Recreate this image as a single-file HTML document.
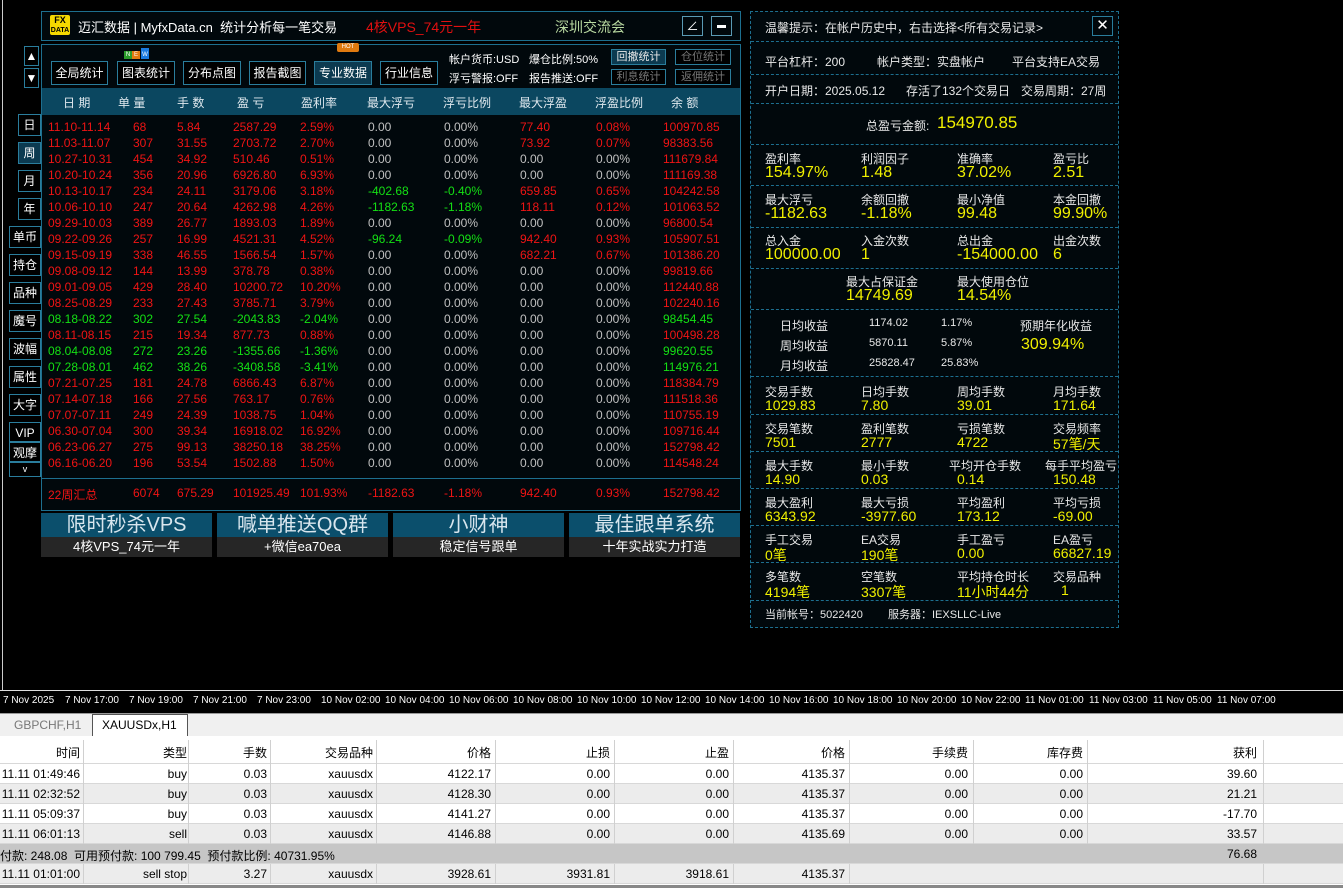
<!DOCTYPE html>
<html><head><meta charset="utf-8"><style>
*{margin:0;padding:0;box-sizing:border-box}
body{width:1343px;height:888px;background:#000;position:relative;overflow:hidden;font-family:"Liberation Sans","Noto Sans CJK SC",sans-serif;font-size:12px;color:#ddd}
.a{position:absolute;white-space:nowrap}
.box{position:absolute;border:1px solid #1d6f8f;background:#01080c}
.btn{position:absolute;border:1px solid #2a7d9c;background:#000;color:#fff;font-size:12px;text-align:center;line-height:22px}
.sb{position:absolute;border:1px solid #2a7d9c;background:#000;color:#fff;font-size:12px;text-align:center;line-height:20px}
.r{position:absolute;height:16px;left:0;width:700px;font-size:12px}
.r span{position:absolute;top:0}
.k1{left:7px}.k2{left:92px}.k3{left:136px}.k4{left:192px}.k5{left:259px}.k6{left:327px}.k7{left:403px}.k8{left:479px}.k9{left:555px}.k10{left:622px}
.R{color:#f01414}.G{color:#14e014}.Z{color:#c0c0c0}
.hd span{color:#dfe8ee;position:absolute;font-size:12px}
.rp{position:absolute;left:750px;top:11px;width:369px;height:617px;border:1px dashed #1d6f8f;background:#01080c}
.sec{position:absolute;left:0;width:367px;border-top:1px dashed #1d6f8f}
.lb{position:absolute;color:#e8e8e8;font-size:12px;white-space:nowrap}
.vl{position:absolute;color:#f0f000;font-size:16px;white-space:nowrap}
.ban{position:absolute;top:513px;width:171px;height:24px;background:#0b4f6c;color:#d8e6ee;font-size:20px;text-align:center;line-height:24px}
.bsub{position:absolute;top:537px;width:171px;height:20px;background:#262626;color:#fff;font-size:13px;text-align:center;line-height:20px}
.tb{position:absolute;left:0;width:1343px;height:20px;font-size:12px;color:#000;border-bottom:1px solid #d8d8d8}
.tb span{position:absolute;top:3px;text-align:right}
.cl{position:absolute;top:740px;width:1px;height:145px;background:#d0d0d0}
</style></head><body>
<div class="a" style="left:2px;top:0;width:1px;height:690px;background:#ccc"></div>
<!-- title bar -->
<div class="box" style="left:41px;top:11px;width:700px;height:30px"></div>
<div class="a" style="left:50px;top:15px;width:20px;height:20px;background:#f5d800;border-radius:2px;color:#000;font-size:9px;font-weight:bold;line-height:9px;text-align:center;padding-top:1px">FX<br><span style="font-size:7px">DATA</span></div>
<div class="a" style="left:78px;top:17px;color:#fff;font-size:13px">迈汇数据 | MyfxData.cn &nbsp;统计分析每一笔交易</div>
<div class="a" style="left:366px;top:17px;color:#e01010;font-size:14px">4核VPS_74元一年</div>
<div class="a" style="left:555px;top:17px;color:#b8d8a0;font-size:14px">深圳交流会</div>
<div class="a" style="left:682px;top:16px;width:21px;height:20px;border:1px solid #5a9ab4;color:#fff;text-align:center;line-height:18px;font-size:12px">∠</div>
<div class="a" style="left:711px;top:16px;width:21px;height:20px;border:1px solid #5a9ab4"><div style="position:absolute;left:5px;top:8px;width:9px;height:3px;background:#fff"></div></div>
<!-- arrows -->
<div class="sb" style="left:24px;top:46px;width:15px;height:20px;line-height:18px">▲</div>
<div class="sb" style="left:24px;top:68px;width:15px;height:20px;line-height:18px">▼</div>
<!-- main box -->
<div class="box" style="left:41px;top:44px;width:700px;height:467px"></div>
<div class="btn" style="left:51px;top:61px;width:57px;height:24px">全局统计</div>
<div class="btn" style="left:117px;top:61px;width:58px;height:24px">图表统计</div>
<div class="a" style="left:124px;top:51px;width:8px;height:8px;background:#2a9a2a;color:#fff;font-size:6px;text-align:center;line-height:8px">N</div>
<div class="a" style="left:132px;top:51px;width:8px;height:8px;background:#e07a10;color:#fff;font-size:6px;text-align:center;line-height:8px">E</div>
<div class="a" style="left:141px;top:48px;width:8px;height:11px;background:#1a7ae0;color:#fff;font-size:6px;text-align:center;line-height:14px">W</div>
<div class="btn" style="left:183px;top:61px;width:58px;height:24px">分布点图</div>
<div class="btn" style="left:249px;top:61px;width:57px;height:24px">报告截图</div>
<div class="btn" style="left:314px;top:61px;width:58px;height:24px;background:#0c3a50">专业数据</div>
<div class="a" style="left:337px;top:43px;width:22px;height:9px;background:#e07a10;color:#fff;font-size:6px;text-align:center;line-height:9px;border-radius:2px">HOT</div>
<div class="btn" style="left:380px;top:61px;width:58px;height:24px">行业信息</div>
<div class="a" style="left:449px;top:51px;color:#fff;font-size:11px">帐户货币:USD</div>
<div class="a" style="left:529px;top:51px;color:#fff;font-size:11px">爆仓比例:50%</div>
<div class="a" style="left:449px;top:70px;color:#fff;font-size:11px">浮亏警报:OFF</div>
<div class="a" style="left:529px;top:70px;color:#fff;font-size:11px">报告推送:OFF</div>
<div class="btn" style="left:611px;top:49px;width:55px;height:16px;line-height:14px;font-size:11px;background:#0c3a50;color:#e8e8e8">回撤统计</div>
<div class="btn" style="left:675px;top:49px;width:56px;height:16px;line-height:14px;font-size:11px;color:#777">仓位统计</div>
<div class="btn" style="left:611px;top:69px;width:55px;height:16px;line-height:14px;font-size:11px;color:#777">利息统计</div>
<div class="btn" style="left:675px;top:69px;width:56px;height:16px;line-height:14px;font-size:11px;color:#777">返佣统计</div>
<!-- header -->
<div class="a hd" style="left:42px;top:88px;width:698px;height:27px;background:#0b4760">
<span style="left:21px;top:6px">日 期</span><span style="left:76px;top:6px">单 量</span><span style="left:135px;top:6px">手 数</span><span style="left:195px;top:6px">盈 亏</span><span style="left:259px;top:6px">盈利率</span><span style="left:325px;top:6px">最大浮亏</span><span style="left:401px;top:6px">浮亏比例</span><span style="left:477px;top:6px">最大浮盈</span><span style="left:553px;top:6px">浮盈比例</span><span style="left:629px;top:6px">余 额</span></div>
<div class="a" style="left:41px;top:478px;width:700px;height:1px;background:#1d6f8f"></div>
<div class="a" style="left:41px;top:120px;width:700px;height:360px">
<div class="r R" style="top:0"><span class="k1">11.10-11.14</span><span class="k2">68</span><span class="k3">5.84</span><span class="k4">2587.29</span><span class="k5">2.59%</span><span class="k6 Z">0.00</span><span class="k7 Z">0.00%</span><span class="k8">77.40</span><span class="k9">0.08%</span><span class="k10">100970.85</span></div>
<div class="r R" style="top:16px"><span class="k1">11.03-11.07</span><span class="k2">307</span><span class="k3">31.55</span><span class="k4">2703.72</span><span class="k5">2.70%</span><span class="k6 Z">0.00</span><span class="k7 Z">0.00%</span><span class="k8">73.92</span><span class="k9">0.07%</span><span class="k10">98383.56</span></div>
<div class="r R" style="top:32px"><span class="k1">10.27-10.31</span><span class="k2">454</span><span class="k3">34.92</span><span class="k4">510.46</span><span class="k5">0.51%</span><span class="k6 Z">0.00</span><span class="k7 Z">0.00%</span><span class="k8 Z">0.00</span><span class="k9 Z">0.00%</span><span class="k10">111679.84</span></div>
<div class="r R" style="top:48px"><span class="k1">10.20-10.24</span><span class="k2">356</span><span class="k3">20.96</span><span class="k4">6926.80</span><span class="k5">6.93%</span><span class="k6 Z">0.00</span><span class="k7 Z">0.00%</span><span class="k8 Z">0.00</span><span class="k9 Z">0.00%</span><span class="k10">111169.38</span></div>
<div class="r R" style="top:64px"><span class="k1">10.13-10.17</span><span class="k2">234</span><span class="k3">24.11</span><span class="k4">3179.06</span><span class="k5">3.18%</span><span class="k6 G">-402.68</span><span class="k7 G">-0.40%</span><span class="k8">659.85</span><span class="k9">0.65%</span><span class="k10">104242.58</span></div>
<div class="r R" style="top:80px"><span class="k1">10.06-10.10</span><span class="k2">247</span><span class="k3">20.64</span><span class="k4">4262.98</span><span class="k5">4.26%</span><span class="k6 G">-1182.63</span><span class="k7 G">-1.18%</span><span class="k8">118.11</span><span class="k9">0.12%</span><span class="k10">101063.52</span></div>
<div class="r R" style="top:96px"><span class="k1">09.29-10.03</span><span class="k2">389</span><span class="k3">26.77</span><span class="k4">1893.03</span><span class="k5">1.89%</span><span class="k6 Z">0.00</span><span class="k7 Z">0.00%</span><span class="k8 Z">0.00</span><span class="k9 Z">0.00%</span><span class="k10">96800.54</span></div>
<div class="r R" style="top:112px"><span class="k1">09.22-09.26</span><span class="k2">257</span><span class="k3">16.99</span><span class="k4">4521.31</span><span class="k5">4.52%</span><span class="k6 G">-96.24</span><span class="k7 G">-0.09%</span><span class="k8">942.40</span><span class="k9">0.93%</span><span class="k10">105907.51</span></div>
<div class="r R" style="top:128px"><span class="k1">09.15-09.19</span><span class="k2">338</span><span class="k3">46.55</span><span class="k4">1566.54</span><span class="k5">1.57%</span><span class="k6 Z">0.00</span><span class="k7 Z">0.00%</span><span class="k8">682.21</span><span class="k9">0.67%</span><span class="k10">101386.20</span></div>
<div class="r R" style="top:144px"><span class="k1">09.08-09.12</span><span class="k2">144</span><span class="k3">13.99</span><span class="k4">378.78</span><span class="k5">0.38%</span><span class="k6 Z">0.00</span><span class="k7 Z">0.00%</span><span class="k8 Z">0.00</span><span class="k9 Z">0.00%</span><span class="k10">99819.66</span></div>
<div class="r R" style="top:160px"><span class="k1">09.01-09.05</span><span class="k2">429</span><span class="k3">28.40</span><span class="k4">10200.72</span><span class="k5">10.20%</span><span class="k6 Z">0.00</span><span class="k7 Z">0.00%</span><span class="k8 Z">0.00</span><span class="k9 Z">0.00%</span><span class="k10">112440.88</span></div>
<div class="r R" style="top:176px"><span class="k1">08.25-08.29</span><span class="k2">233</span><span class="k3">27.43</span><span class="k4">3785.71</span><span class="k5">3.79%</span><span class="k6 Z">0.00</span><span class="k7 Z">0.00%</span><span class="k8 Z">0.00</span><span class="k9 Z">0.00%</span><span class="k10">102240.16</span></div>
<div class="r G" style="top:192px"><span class="k1">08.18-08.22</span><span class="k2">302</span><span class="k3">27.54</span><span class="k4">-2043.83</span><span class="k5">-2.04%</span><span class="k6 Z">0.00</span><span class="k7 Z">0.00%</span><span class="k8 Z">0.00</span><span class="k9 Z">0.00%</span><span class="k10">98454.45</span></div>
<div class="r R" style="top:208px"><span class="k1">08.11-08.15</span><span class="k2">215</span><span class="k3">19.34</span><span class="k4">877.73</span><span class="k5">0.88%</span><span class="k6 Z">0.00</span><span class="k7 Z">0.00%</span><span class="k8 Z">0.00</span><span class="k9 Z">0.00%</span><span class="k10">100498.28</span></div>
<div class="r G" style="top:224px"><span class="k1">08.04-08.08</span><span class="k2">272</span><span class="k3">23.26</span><span class="k4">-1355.66</span><span class="k5">-1.36%</span><span class="k6 Z">0.00</span><span class="k7 Z">0.00%</span><span class="k8 Z">0.00</span><span class="k9 Z">0.00%</span><span class="k10">99620.55</span></div>
<div class="r G" style="top:240px"><span class="k1">07.28-08.01</span><span class="k2">462</span><span class="k3">38.26</span><span class="k4">-3408.58</span><span class="k5">-3.41%</span><span class="k6 Z">0.00</span><span class="k7 Z">0.00%</span><span class="k8 Z">0.00</span><span class="k9 Z">0.00%</span><span class="k10">114976.21</span></div>
<div class="r R" style="top:256px"><span class="k1">07.21-07.25</span><span class="k2">181</span><span class="k3">24.78</span><span class="k4">6866.43</span><span class="k5">6.87%</span><span class="k6 Z">0.00</span><span class="k7 Z">0.00%</span><span class="k8 Z">0.00</span><span class="k9 Z">0.00%</span><span class="k10">118384.79</span></div>
<div class="r R" style="top:272px"><span class="k1">07.14-07.18</span><span class="k2">166</span><span class="k3">27.56</span><span class="k4">763.17</span><span class="k5">0.76%</span><span class="k6 Z">0.00</span><span class="k7 Z">0.00%</span><span class="k8 Z">0.00</span><span class="k9 Z">0.00%</span><span class="k10">111518.36</span></div>
<div class="r R" style="top:288px"><span class="k1">07.07-07.11</span><span class="k2">249</span><span class="k3">24.39</span><span class="k4">1038.75</span><span class="k5">1.04%</span><span class="k6 Z">0.00</span><span class="k7 Z">0.00%</span><span class="k8 Z">0.00</span><span class="k9 Z">0.00%</span><span class="k10">110755.19</span></div>
<div class="r R" style="top:304px"><span class="k1">06.30-07.04</span><span class="k2">300</span><span class="k3">39.34</span><span class="k4">16918.02</span><span class="k5">16.92%</span><span class="k6 Z">0.00</span><span class="k7 Z">0.00%</span><span class="k8 Z">0.00</span><span class="k9 Z">0.00%</span><span class="k10">109716.44</span></div>
<div class="r R" style="top:320px"><span class="k1">06.23-06.27</span><span class="k2">275</span><span class="k3">99.13</span><span class="k4">38250.18</span><span class="k5">38.25%</span><span class="k6 Z">0.00</span><span class="k7 Z">0.00%</span><span class="k8 Z">0.00</span><span class="k9 Z">0.00%</span><span class="k10">152798.42</span></div>
<div class="r R" style="top:336px"><span class="k1">06.16-06.20</span><span class="k2">196</span><span class="k3">53.54</span><span class="k4">1502.88</span><span class="k5">1.50%</span><span class="k6 Z">0.00</span><span class="k7 Z">0.00%</span><span class="k8 Z">0.00</span><span class="k9 Z">0.00%</span><span class="k10">114548.24</span></div>
</div>
<div class="r R" style="left:41px;top:486px"><span class="k1">22周汇总</span><span class="k2">6074</span><span class="k3">675.29</span><span class="k4">101925.49</span><span class="k5">101.93%</span><span class="k6">-1182.63</span><span class="k7">-1.18%</span><span class="k8">942.40</span><span class="k9">0.93%</span><span class="k10">152798.42</span></div>
<!-- side buttons -->
<div class="sb" style="left:18px;top:114px;width:23px;height:22px">日</div>
<div class="sb" style="left:18px;top:142px;width:23px;height:22px;background:#0c3a50">周</div>
<div class="sb" style="left:18px;top:170px;width:23px;height:22px">月</div>
<div class="sb" style="left:18px;top:198px;width:23px;height:22px">年</div>
<div class="sb" style="left:9px;top:226px;width:32px;height:22px">单币</div>
<div class="sb" style="left:9px;top:254px;width:32px;height:22px">持仓</div>
<div class="sb" style="left:9px;top:282px;width:32px;height:22px">品种</div>
<div class="sb" style="left:9px;top:310px;width:32px;height:22px">魔号</div>
<div class="sb" style="left:9px;top:338px;width:32px;height:22px">波幅</div>
<div class="sb" style="left:9px;top:366px;width:32px;height:22px">属性</div>
<div class="sb" style="left:9px;top:394px;width:32px;height:22px">大字</div>
<div class="sb" style="left:9px;top:422px;width:32px;height:20px">VIP</div>
<div class="sb" style="left:9px;top:442px;width:32px;height:20px">观摩</div>
<div class="sb" style="left:9px;top:462px;width:32px;height:15px;line-height:12px;font-size:9px">v</div>
<!-- banners -->
<div class="ban" style="left:41px">限时秒杀VPS</div><div class="bsub" style="left:41px">4核VPS_74元一年</div>
<div class="ban" style="left:217px">喊单推送QQ群</div><div class="bsub" style="left:217px">+微信ea70ea</div>
<div class="ban" style="left:393px">小财神</div><div class="bsub" style="left:393px">稳定信号跟单</div>
<div class="ban" style="left:569px">最佳跟单系统</div><div class="bsub" style="left:569px">十年实战实力打造</div>
<!-- right panel -->
<div class="rp">
<div class="lb" style="left:14px;top:7px">温馨提示：在帐户历史中，右击选择&lt;所有交易记录&gt;</div>
<div class="a" style="left:341px;top:4px;width:21px;height:20px;border:1px solid #2a7d9c;color:#fff;text-align:center;line-height:18px;font-size:15px">✕</div>
<div class="sec" style="top:29px"></div>
<div class="lb" style="left:14px;top:41px">平台杠杆：200</div><div class="lb" style="left:126px;top:41px">帐户类型：实盘帐户</div><div class="lb" style="left:261px;top:41px">平台支持EA交易</div>
<div class="sec" style="top:62px"></div>
<div class="lb" style="left:14px;top:70px">开户日期：2025.05.12</div><div class="lb" style="left:155px;top:70px">存活了132个交易日</div><div class="lb" style="left:270px;top:70px">交易周期：27周</div>
<div class="sec" style="top:91px"></div>
<div class="lb" style="left:115px;top:105px">总盈亏金额:</div><div class="vl" style="left:186px;top:101px;font-size:17px">154970.85</div>
<div class="sec" style="top:132px"></div>
<div class="lb" style="left:14px;top:138px">盈利率</div><div class="lb" style="left:110px;top:138px">利润因子</div><div class="lb" style="left:206px;top:138px">准确率</div><div class="lb" style="left:302px;top:138px">盈亏比</div>
<div class="vl" style="left:14px;top:152px">154.97%</div><div class="vl" style="left:110px;top:152px">1.48</div><div class="vl" style="left:206px;top:152px">37.02%</div><div class="vl" style="left:302px;top:152px">2.51</div>
<div class="sec" style="top:173px"></div>
<div class="lb" style="left:14px;top:179px">最大浮亏</div><div class="lb" style="left:110px;top:179px">余额回撤</div><div class="lb" style="left:206px;top:179px">最小净值</div><div class="lb" style="left:302px;top:179px">本金回撤</div>
<div class="vl" style="left:14px;top:193px">-1182.63</div><div class="vl" style="left:110px;top:193px">-1.18%</div><div class="vl" style="left:206px;top:193px">99.48</div><div class="vl" style="left:302px;top:193px">99.90%</div>
<div class="sec" style="top:215px"></div>
<div class="lb" style="left:14px;top:220px">总入金</div><div class="lb" style="left:110px;top:220px">入金次数</div><div class="lb" style="left:206px;top:220px">总出金</div><div class="lb" style="left:302px;top:220px">出金次数</div>
<div class="vl" style="left:14px;top:234px">100000.00</div><div class="vl" style="left:110px;top:234px">1</div><div class="vl" style="left:206px;top:234px">-154000.00</div><div class="vl" style="left:302px;top:234px">6</div>
<div class="sec" style="top:256px"></div>
<div class="lb" style="left:95px;top:261px">最大占保证金</div><div class="lb" style="left:206px;top:261px">最大使用仓位</div>
<div class="vl" style="left:95px;top:275px">14749.69</div><div class="vl" style="left:206px;top:275px">14.54%</div>
<div class="sec" style="top:297px"></div>
<div class="lb" style="left:29px;top:305px">日均收益</div><div class="lb" style="left:118px;top:305px;font-size:11px">1174.02</div><div class="lb" style="left:190px;top:305px;font-size:11px">1.17%</div><div class="lb" style="left:269px;top:305px">预期年化收益</div>
<div class="lb" style="left:29px;top:325px">周均收益</div><div class="lb" style="left:118px;top:325px;font-size:11px">5870.11</div><div class="lb" style="left:190px;top:325px;font-size:11px">5.87%</div><div class="vl" style="left:270px;top:324px">309.94%</div>
<div class="lb" style="left:29px;top:345px">月均收益</div><div class="lb" style="left:118px;top:345px;font-size:11px">25828.47</div><div class="lb" style="left:190px;top:345px;font-size:11px">25.83%</div>
<div class="sec" style="top:364px"></div>
<div class="lb" style="left:14px;top:371px">交易手数</div><div class="lb" style="left:110px;top:371px">日均手数</div><div class="lb" style="left:206px;top:371px">周均手数</div><div class="lb" style="left:302px;top:371px">月均手数</div>
<div class="vl" style="left:14px;top:385px;font-size:14px">1029.83</div><div class="vl" style="left:110px;top:385px;font-size:14px">7.80</div><div class="vl" style="left:206px;top:385px;font-size:14px">39.01</div><div class="vl" style="left:302px;top:385px;font-size:14px">171.64</div>
<div class="sec" style="top:402px"></div>
<div class="lb" style="left:14px;top:408px">交易笔数</div><div class="lb" style="left:110px;top:408px">盈利笔数</div><div class="lb" style="left:206px;top:408px">亏损笔数</div><div class="lb" style="left:302px;top:408px">交易频率</div>
<div class="vl" style="left:14px;top:422px;font-size:14px">7501</div><div class="vl" style="left:110px;top:422px;font-size:14px">2777</div><div class="vl" style="left:206px;top:422px;font-size:14px">4722</div><div class="vl" style="left:302px;top:422px;font-size:14px">57笔/天</div>
<div class="sec" style="top:439px"></div>
<div class="lb" style="left:14px;top:445px">最大手数</div><div class="lb" style="left:110px;top:445px">最小手数</div><div class="lb" style="left:198px;top:445px">平均开仓手数</div><div class="lb" style="left:294px;top:445px">每手平均盈亏</div>
<div class="vl" style="left:14px;top:459px;font-size:14px">14.90</div><div class="vl" style="left:110px;top:459px;font-size:14px">0.03</div><div class="vl" style="left:206px;top:459px;font-size:14px">0.14</div><div class="vl" style="left:302px;top:459px;font-size:14px">150.48</div>
<div class="sec" style="top:476px"></div>
<div class="lb" style="left:14px;top:482px">最大盈利</div><div class="lb" style="left:110px;top:482px">最大亏损</div><div class="lb" style="left:206px;top:482px">平均盈利</div><div class="lb" style="left:302px;top:482px">平均亏损</div>
<div class="vl" style="left:14px;top:496px;font-size:14px">6343.92</div><div class="vl" style="left:110px;top:496px;font-size:14px">-3977.60</div><div class="vl" style="left:206px;top:496px;font-size:14px">173.12</div><div class="vl" style="left:302px;top:496px;font-size:14px">-69.00</div>
<div class="sec" style="top:513px"></div>
<div class="lb" style="left:14px;top:519px">手工交易</div><div class="lb" style="left:110px;top:519px">EA交易</div><div class="lb" style="left:206px;top:519px">手工盈亏</div><div class="lb" style="left:302px;top:519px">EA盈亏</div>
<div class="vl" style="left:14px;top:533px;font-size:14px">0笔</div><div class="vl" style="left:110px;top:533px;font-size:14px">190笔</div><div class="vl" style="left:206px;top:533px;font-size:14px">0.00</div><div class="vl" style="left:302px;top:533px;font-size:14px">66827.19</div>
<div class="sec" style="top:550px"></div>
<div class="lb" style="left:14px;top:556px">多笔数</div><div class="lb" style="left:110px;top:556px">空笔数</div><div class="lb" style="left:206px;top:556px">平均持仓时长</div><div class="lb" style="left:302px;top:556px">交易品种</div>
<div class="vl" style="left:14px;top:570px;font-size:14px">4194笔</div><div class="vl" style="left:110px;top:570px;font-size:14px">3307笔</div><div class="vl" style="left:206px;top:570px;font-size:14px">11小时44分</div><div class="vl" style="left:310px;top:570px;font-size:14px">1</div>
<div class="sec" style="top:588px"></div>
<div class="lb" style="left:14px;top:594px;font-size:11px">当前帐号：5022420</div><div class="lb" style="left:137px;top:594px;font-size:11px">服务器：IEXSLLC-Live</div>
</div>
<!-- time axis -->
<div class="a" style="left:0;top:690px;width:1343px;height:1px;background:#ddd"></div>
<div class="a" style="left:0;top:695px;color:#fff;font-size:10px;word-spacing:0">
<span class="a" style="left:3px">7 Nov 2025</span><span class="a" style="left:65px">7 Nov 17:00</span><span class="a" style="left:129px">7 Nov 19:00</span><span class="a" style="left:193px">7 Nov 21:00</span><span class="a" style="left:257px">7 Nov 23:00</span><span class="a" style="left:321px">10 Nov 02:00</span><span class="a" style="left:385px">10 Nov 04:00</span><span class="a" style="left:449px">10 Nov 06:00</span><span class="a" style="left:513px">10 Nov 08:00</span><span class="a" style="left:577px">10 Nov 10:00</span><span class="a" style="left:641px">10 Nov 12:00</span><span class="a" style="left:705px">10 Nov 14:00</span><span class="a" style="left:769px">10 Nov 16:00</span><span class="a" style="left:833px">10 Nov 18:00</span><span class="a" style="left:897px">10 Nov 20:00</span><span class="a" style="left:961px">10 Nov 22:00</span><span class="a" style="left:1025px">11 Nov 01:00</span><span class="a" style="left:1089px">11 Nov 03:00</span><span class="a" style="left:1153px">11 Nov 05:00</span><span class="a" style="left:1217px">11 Nov 07:00</span></div>
<!-- bottom -->
<div class="a" style="left:0;top:713px;width:1343px;height:175px;background:#fff"></div>
<div class="a" style="left:0;top:713px;width:1343px;height:23px;background:#f0f0f0;border-top:1px solid #999"></div>
<div class="a" style="left:14px;top:718px;color:#777;font-size:12px">GBPCHF,H1</div>
<div class="a" style="left:92px;top:714px;width:96px;height:22px;background:#fff;border:1px solid #555;border-bottom:none;color:#000;font-size:12px;padding:3px 0 0 9px">XAUUSDx,H1</div>
<div class="tb" style="top:740px;height:24px;background:#fff"><span style="right:1263px;top:4px">时间</span><span style="right:1156px;top:4px">类型</span><span style="right:1076px;top:4px">手数</span><span style="right:970px;top:4px">交易品种</span><span style="right:852px;top:4px">价格</span><span style="right:733px;top:4px">止损</span><span style="right:614px;top:4px">止盈</span><span style="right:498px;top:4px">价格</span><span style="right:375px;top:4px">手续费</span><span style="right:260px;top:4px">库存费</span><span style="right:86px;top:4px">获利</span></div>
<div class="tb" style="top:764px;background:#fff"><span style="right:1263px">11.11 01:49:46</span><span style="right:1156px">buy</span><span style="right:1076px">0.03</span><span style="right:970px">xauusdx</span><span style="right:852px">4122.17</span><span style="right:733px">0.00</span><span style="right:614px">0.00</span><span style="right:498px">4135.37</span><span style="right:375px">0.00</span><span style="right:260px">0.00</span><span style="right:86px">39.60</span></div>
<div class="tb" style="top:784px;background:#ececec"><span style="right:1263px">11.11 02:32:52</span><span style="right:1156px">buy</span><span style="right:1076px">0.03</span><span style="right:970px">xauusdx</span><span style="right:852px">4128.30</span><span style="right:733px">0.00</span><span style="right:614px">0.00</span><span style="right:498px">4135.37</span><span style="right:375px">0.00</span><span style="right:260px">0.00</span><span style="right:86px">21.21</span></div>
<div class="tb" style="top:804px;background:#fff"><span style="right:1263px">11.11 05:09:37</span><span style="right:1156px">buy</span><span style="right:1076px">0.03</span><span style="right:970px">xauusdx</span><span style="right:852px">4141.27</span><span style="right:733px">0.00</span><span style="right:614px">0.00</span><span style="right:498px">4135.37</span><span style="right:375px">0.00</span><span style="right:260px">0.00</span><span style="right:86px">-17.70</span></div>
<div class="tb" style="top:824px;background:#ececec"><span style="right:1263px">11.11 06:01:13</span><span style="right:1156px">sell</span><span style="right:1076px">0.03</span><span style="right:970px">xauusdx</span><span style="right:852px">4146.88</span><span style="right:733px">0.00</span><span style="right:614px">0.00</span><span style="right:498px">4135.69</span><span style="right:375px">0.00</span><span style="right:260px">0.00</span><span style="right:86px">33.57</span></div>
<div class="tb" style="top:844px;background:#c6c6c6"><span style="left:0;text-align:left">付款: 248.08 &nbsp;可用预付款: 100 799.45 &nbsp;预付款比例: 40731.95%</span><span style="right:86px">76.68</span></div>
<div class="tb" style="top:864px;background:#ececec"><span style="right:1263px">11.11 01:01:00</span><span style="right:1156px">sell stop</span><span style="right:1076px">3.27</span><span style="right:970px">xauusdx</span><span style="right:852px">3928.61</span><span style="right:733px">3931.81</span><span style="right:614px">3918.61</span><span style="right:498px">4135.37</span></div>
<div class="cl" style="left:83px;height:104px"></div><div class="cl" style="left:188px;height:104px"></div><div class="cl" style="left:270px;height:104px"></div><div class="cl" style="left:376px;height:104px"></div><div class="cl" style="left:495px;height:104px"></div><div class="cl" style="left:614px;height:104px"></div><div class="cl" style="left:733px;height:104px"></div><div class="cl" style="left:849px;height:104px"></div><div class="cl" style="left:973px;height:104px"></div><div class="cl" style="left:1087px;height:104px"></div><div class="cl" style="left:1263px;height:104px"></div>
<div class="cl" style="left:83px;top:864px;height:20px"></div><div class="cl" style="left:188px;top:864px;height:20px"></div><div class="cl" style="left:270px;top:864px;height:20px"></div><div class="cl" style="left:376px;top:864px;height:20px"></div><div class="cl" style="left:495px;top:864px;height:20px"></div><div class="cl" style="left:614px;top:864px;height:20px"></div><div class="cl" style="left:733px;top:864px;height:20px"></div><div class="cl" style="left:849px;top:864px;height:20px"></div><div class="cl" style="left:1263px;top:864px;height:20px"></div>
<div class="a" style="left:0;top:885px;width:1343px;height:3px;background:#888"></div>
</body></html>
